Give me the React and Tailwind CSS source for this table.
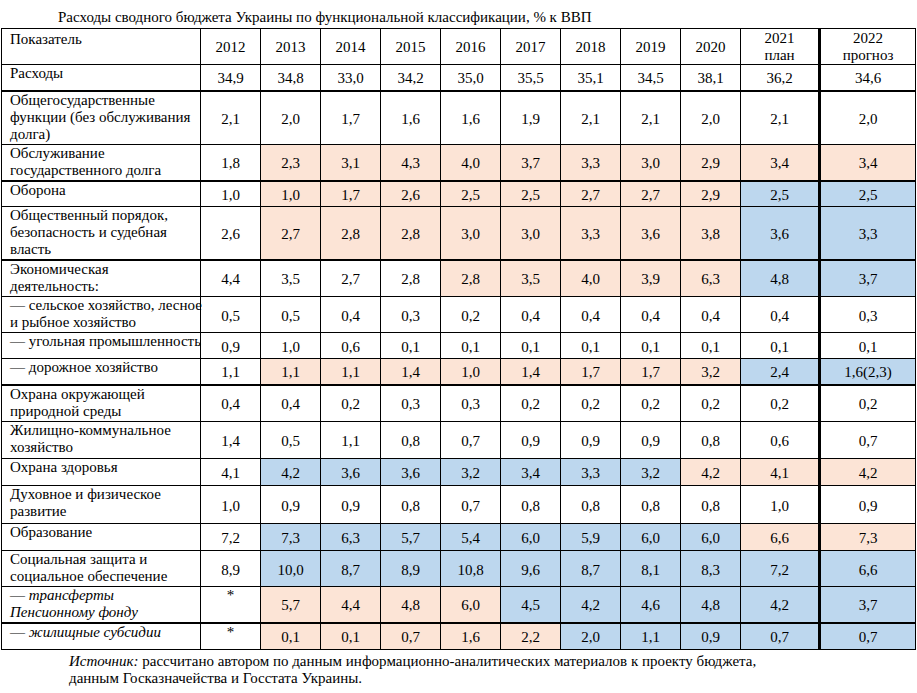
import React from "react";

const P = "bg-[#fce4d6]";
const B = "bg-[#bdd7ee]";

const years = ["2012", "2013", "2014", "2015", "2016", "2017", "2018", "2019", "2020"];

// label lines, row height, thick bottom border, values, colours, italic
const rows = [
  { label: ["Расходы"], h: "h-[26px]", thick: true, v: ["34,9", "34,8", "33,0", "34,2", "35,0", "35,5", "35,1", "34,5", "38,1", "36,2", "34,6"], c: "WWWWWWWWWWW" },
  { label: ["Общегосударственные", "функции (без обслуживания", "долга)"], h: "h-[54px]", v: ["2,1", "2,0", "1,7", "1,6", "1,6", "1,9", "2,1", "2,1", "2,0", "2,1", "2,0"], c: "WWWWWWWWWWW" },
  { label: ["Обслуживание", "государственного долга"], h: "h-[36px]", thick: true, v: ["1,8", "2,3", "3,1", "4,3", "4,0", "3,7", "3,3", "3,0", "2,9", "3,4", "3,4"], c: "WPPPPPPPPPP" },
  { label: ["Оборона"], h: "h-[26px]", v: ["1,0", "1,0", "1,7", "2,6", "2,5", "2,5", "2,7", "2,7", "2,9", "2,5", "2,5"], c: "WPPPPPPPPBB" },
  { label: ["Общественный порядок,", "безопасность и судебная", "власть"], h: "h-[53px]", thick: true, v: ["2,6", "2,7", "2,8", "2,8", "3,0", "3,0", "3,3", "3,6", "3,8", "3,6", "3,3"], c: "WPPPPPPPPBB" },
  { label: ["Экономическая", "деятельность:"], h: "h-[37px]", v: ["4,4", "3,5", "2,7", "2,8", "2,8", "3,5", "4,0", "3,9", "6,3", "4,8", "3,7"], c: "WWWWPPPPPBB" },
  { label: ["— сельское хозяйство, лесное", "и рыбное хозяйство"], h: "h-[36px]", v: ["0,5", "0,5", "0,4", "0,3", "0,2", "0,4", "0,4", "0,4", "0,4", "0,4", "0,3"], c: "WWWWWWWWWWW" },
  { label: ["— угольная промышленность"], h: "h-[26px]", v: ["0,9", "1,0", "0,6", "0,1", "0,1", "0,1", "0,1", "0,1", "0,1", "0,1", "0,1"], c: "WWWWWWWWWWW" },
  { label: ["— дорожное хозяйство"], h: "h-[26px]", thick: true, v: ["1,1", "1,1", "1,1", "1,4", "1,0", "1,4", "1,7", "1,7", "3,2", "2,4", "1,6(2,3)"], c: "WPPPPPPPPBB" },
  { label: ["Охрана окружающей", "природной среды"], h: "h-[37px]", v: ["0,4", "0,4", "0,2", "0,3", "0,3", "0,2", "0,2", "0,2", "0,2", "0,2", "0,2"], c: "WWWWWWWWWWW" },
  { label: ["Жилищно-коммунальное", "хозяйство"], h: "h-[37px]", v: ["1,4", "0,5", "1,1", "0,8", "0,7", "0,9", "0,9", "0,9", "0,8", "0,6", "0,7"], c: "WWWWWWWWWWW" },
  { label: ["Охрана здоровья"], h: "h-[27px]", v: ["4,1", "4,2", "3,6", "3,6", "3,2", "3,4", "3,3", "3,2", "4,2", "4,1", "4,2"], c: "WBBBBBBBPPP" },
  { label: ["Духовное и физическое", "развитие"], h: "h-[38px]", v: ["1,0", "0,9", "0,9", "0,8", "0,7", "0,8", "0,8", "0,8", "0,8", "1,0", "0,9"], c: "WWWWWWWWWWW" },
  { label: ["Образование"], h: "h-[27px]", v: ["7,2", "7,3", "6,3", "5,7", "5,4", "6,0", "5,9", "6,0", "6,0", "6,6", "7,3"], c: "WBBBBBBBBPP" },
  { label: ["Социальная защита и", "социальное обеспечение"], h: "h-[36px]", v: ["8,9", "10,0", "8,7", "8,9", "10,8", "9,6", "8,7", "8,1", "8,3", "7,2", "6,6"], c: "WBBBBBBBBBB" },
  { label: ["трансферты", "Пенсионному фонду"], italic: true, h: "h-[36px]", thick: true, v: ["*", "5,7", "4,4", "4,8", "6,0", "4,5", "4,2", "4,6", "4,8", "4,2", "3,7"], c: "WPPPPBBBBBB" },
  { label: ["жилищные субсидии"], italic: true, h: "h-[27px]", v: ["*", "0,1", "0,1", "0,7", "1,6", "2,2", "2,0", "1,1", "0,9", "0,7", "0,7"], c: "WPPPPPBBBBB" },
];

const colour = { P, B, W: "" };

const Label = ({ r }) => {
  if (r.italic) {
    return (
      <>
        — <i>{r.label[0]}</i>
        {r.label[1] && (
          <>
            <br />
            <i>{r.label[1]}</i>
          </>
        )}
      </>
    );
  }
  return r.label.map((line, k) => (
    <React.Fragment key={k}>
      {k > 0 && <br />}
      {line}
    </React.Fragment>
  ));
};

export default function App() {
  return (
    <div className="w-[917px] h-[693px] overflow-hidden bg-white text-black font-['Liberation_Serif','Times_New_Roman',serif] text-[15px] leading-[17px]">
      <div className="pl-[58px] pt-[9px] pb-[2px]">
        Расходы сводного бюджета Украины по функциональной классификации, % к ВВП
      </div>
      <table className="ml-px w-[915px] table-fixed border-collapse border border-black">
        <colgroup>
          <col className="w-[199px]" />
          {years.map((y) => (
            <col key={y} className="w-[60px]" />
          ))}
          <col className="w-[79px]" />
          <col className="w-[96px]" />
        </colgroup>
        <tbody>
          <tr className="h-[36px]">
            <td className="border border-black align-top pl-2 pt-[2px]">Показатель</td>
            {years.map((y) => (
              <td key={y} className="border border-black text-center align-middle pt-px">
                {y}
              </td>
            ))}
            <td className="border border-black border-r-[3px] text-center align-middle">
              2021
              <br />
              план
            </td>
            <td className="border border-black text-center align-middle">
              2022
              <br />
              прогноз
            </td>
          </tr>
          {rows.map((r, i) => (
            <tr key={i} className={r.h}>
              <td
                className={`border border-black align-top pl-2 pr-0 py-0 whitespace-nowrap overflow-visible ${r.thick ? "border-b-2" : ""}`}
              >
                <Label r={r} />
              </td>
              {r.v.map((v, j) => (
                <td
                  key={j}
                  className={`border border-black text-center p-0 ${v === "*" ? "align-top" : "align-middle pt-[3px]"} ${colour[r.c[j]]} ${j === 9 ? "border-r-[3px]" : ""} ${r.thick ? "border-b-2" : ""}`}
                >
                  {v}
                </td>
              ))}
            </tr>
          ))}
        </tbody>
      </table>
      <div className="pl-[69px] pt-[3px]">
        <i>Источник:</i> рассчитано автором по данным информационно-аналитических материалов к проекту бюджета,
        <br />
        данным Госказначейства и Госстата Украины.
      </div>
    </div>
  );
}
